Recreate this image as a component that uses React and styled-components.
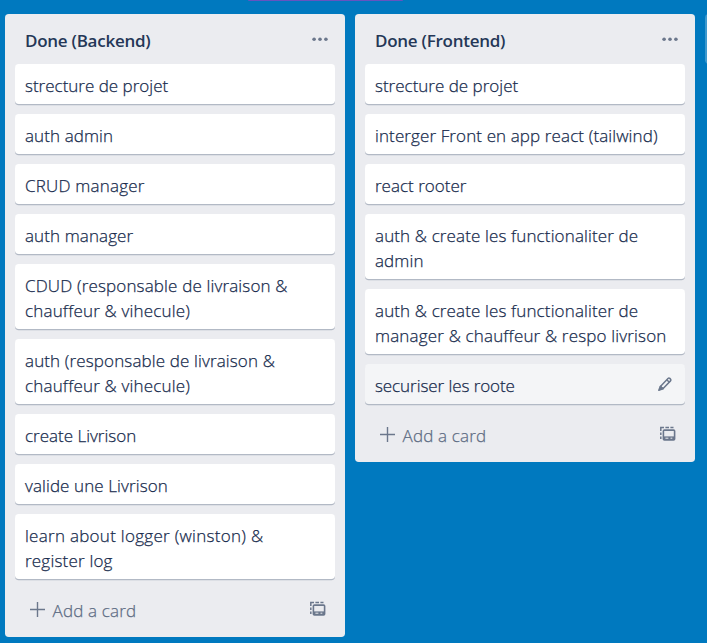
import React from 'react';
import styled, { createGlobalStyle } from 'styled-components';

const GlobalStyle = createGlobalStyle`
  * { box-sizing: border-box; }
  body {
    margin: 0;
    overflow: hidden;
    background: #0079bf;
    color: #172b4d;
    font-family: "Open Sans", "Noto Sans", sans-serif;
    font-size: 17px;
    line-height: 25px;
  }
`;

const Board = styled.main`
  height: 643px;
  overflow: hidden;
`;

const BoardHeader = styled.div`
  height: 14px;
  padding-left: 248px;
`;

const HeaderBadge = styled.div`
  width: 155px;
  height: 1px;
  background: #6554c0;
  border-radius: 0 0 3px 3px;
`;

const Lists = styled.div`
  display: flex;
  align-items: flex-start;
  gap: 10px;
  padding-left: 5px;
`;

const List = styled.section`
  flex: 0 0 340px;
  background: #ebecf0;
  border-radius: 3.75px;
`;

const AddList = styled.div`
  flex: 0 0 340px;
  height: 50px;
  background: rgba(255, 255, 255, 0.24);
  border-radius: 3.75px;
`;

const ListHeader = styled.header`
  display: flex;
  justify-content: space-between;
  height: 50px;
  padding: 14px 16px 0 20px;
`;

const ListTitle = styled.h2`
  margin: 0;
  color: #243757;
  font-size: 17px;
  font-weight: 600;
  line-height: 25px;
  white-space: nowrap;
  letter-spacing: -0.26px;
`;

const Cards = styled.div`
  display: flex;
  flex-direction: column;
  gap: 10px;
  padding: 0 10px;
`;

const Card = styled.article`
  display: flex;
  justify-content: space-between;
  padding: 9px 12px 6px 10px;
  background: ${(p) => (p.$hovered ? '#f4f5f7' : '#fff')};
  border-radius: 3.75px;
  box-shadow: 0 1.25px 0 rgba(9, 30, 66, 0.25);
`;

const Line = styled.span`
  display: block;
  width: max-content;
  font-weight: 300;
  -webkit-text-stroke: 0.25px currentColor;
  white-space: nowrap;
  letter-spacing: ${(p) => p.$tracking}px;
`;

const Footer = styled.footer`
  display: flex;
  justify-content: space-between;
  height: 57.5px;
  padding: 19px 19px 0 25px;
  color: #5e6c84;
`;

const AddCard = styled.div`
  display: flex;
  gap: 7.5px;
`;

const Icon = styled.svg`
  display: block;
  flex: none;
  width: ${(p) => p.$size}px;
  height: ${(p) => p.$size}px;
  margin-top: ${(p) => p.$top || 0}px;
  color: #6b778c;
`;

const Dots = () => (
  <Icon $size={18} $top={2} viewBox="0 0 18 18" fill="currentColor">
    <circle cx="3.1" cy="9.3" r="1.8" />
    <circle cx="9" cy="9.3" r="1.8" />
    <circle cx="14.9" cy="9.3" r="1.8" />
  </Icon>
);

const Plus = () => (
  <Icon $size={15} $top={4} viewBox="0 0 15 15" fill="none" stroke="currentColor" strokeWidth="1.4">
    <path d="M7.5 0v15M0 7.5h15" />
  </Icon>
);

const Pencil = () => (
  <Icon $size={16} $top={3} viewBox="0 0 16 16" fill="none" stroke="currentColor" strokeWidth="1.5" strokeLinejoin="round">
    <path d="M3.4 10.4 11 2.5Q11.9 1.6 12.8 2.4L13.5 3.1Q14.4 4 13.5 4.9L5.9 12.8Z" />
    <path d="M3.3 10.4 1.8 14.3 5.9 12.9Z" fill="currentColor" />
    <path d="M9.8 3.8 12.3 6.2" />
  </Icon>
);

const Template = () => (
  <Icon $size={16} $top={3} viewBox="0 0 16 16" fill="none" stroke="currentColor" strokeWidth="1.5">
    <path d="M.8 13V10.5M.8 9V6.5M.8 5V1.6H4M5.4 1.6H9M10.4 1.6H13.5" />
    <rect x="3.4" y="4.1" width="11.2" height="9.8" rx="1" strokeWidth="1.6" />
    <path d="M3.4 12H14.6" strokeWidth="3.2" />
    <path d="M5.4 12.2H8.4M10.5 12.2H12.3" stroke="#ebecf0" strokeWidth="1" />
  </Icon>
);

const lists = [
  {
    title: 'Done (Backend)',
    cards: [
      [['strecture de projet', 0]],
      [['auth admin', 0.1]],
      [['CRUD manager', 0.2]],
      [['auth manager', 0.1]],
      [['CDUD (responsable de livraison &', 0.15], ['chauffeur & vihecule)', 0.18]],
      [['auth (responsable de livraison &', 0.13], ['chauffeur & vihecule)', 0.18]],
      [['create Livrison', 0]],
      [['valide une Livrison', 0.1]],
      [['learn about logger (winston) &', 0.28], ['register log', 0.2]],
    ],
  },
  {
    title: 'Done (Frontend)',
    hovered: 5,
    cards: [
      [['strecture de projet', 0]],
      [['interger Front en app react (tailwind)', 0.11]],
      [['react rooter', 0]],
      [['auth & create les functionaliter de', 0.13], ['admin', 0.1]],
      [['auth & create les functionaliter de', 0.13], ['manager & chauffeur & respo livrison', 0.17]],
      [['securiser les roote', -0.07]],
    ],
  },
];

export default function App() {
  return (
    <Board>
      <GlobalStyle />
      <BoardHeader><HeaderBadge /></BoardHeader>
      <Lists>
        {lists.map((list) => (
          <List key={list.title}>
            <ListHeader>
              <ListTitle>{list.title}</ListTitle>
              <Dots />
            </ListHeader>
            <Cards>
              {list.cards.map((lines, i) => (
                <Card key={i} $hovered={list.hovered === i}>
                  <div>
                    {lines.map(([text, tracking]) => <Line key={text} $tracking={tracking}>{text}</Line>)}
                  </div>
                  {list.hovered === i && <Pencil />}
                </Card>
              ))}
            </Cards>
            <Footer>
              <AddCard><Plus /><Line $tracking={0.17}>Add a card</Line></AddCard>
              <Template />
            </Footer>
          </List>
        ))}
        <AddList />
      </Lists>
    </Board>
  );
}
